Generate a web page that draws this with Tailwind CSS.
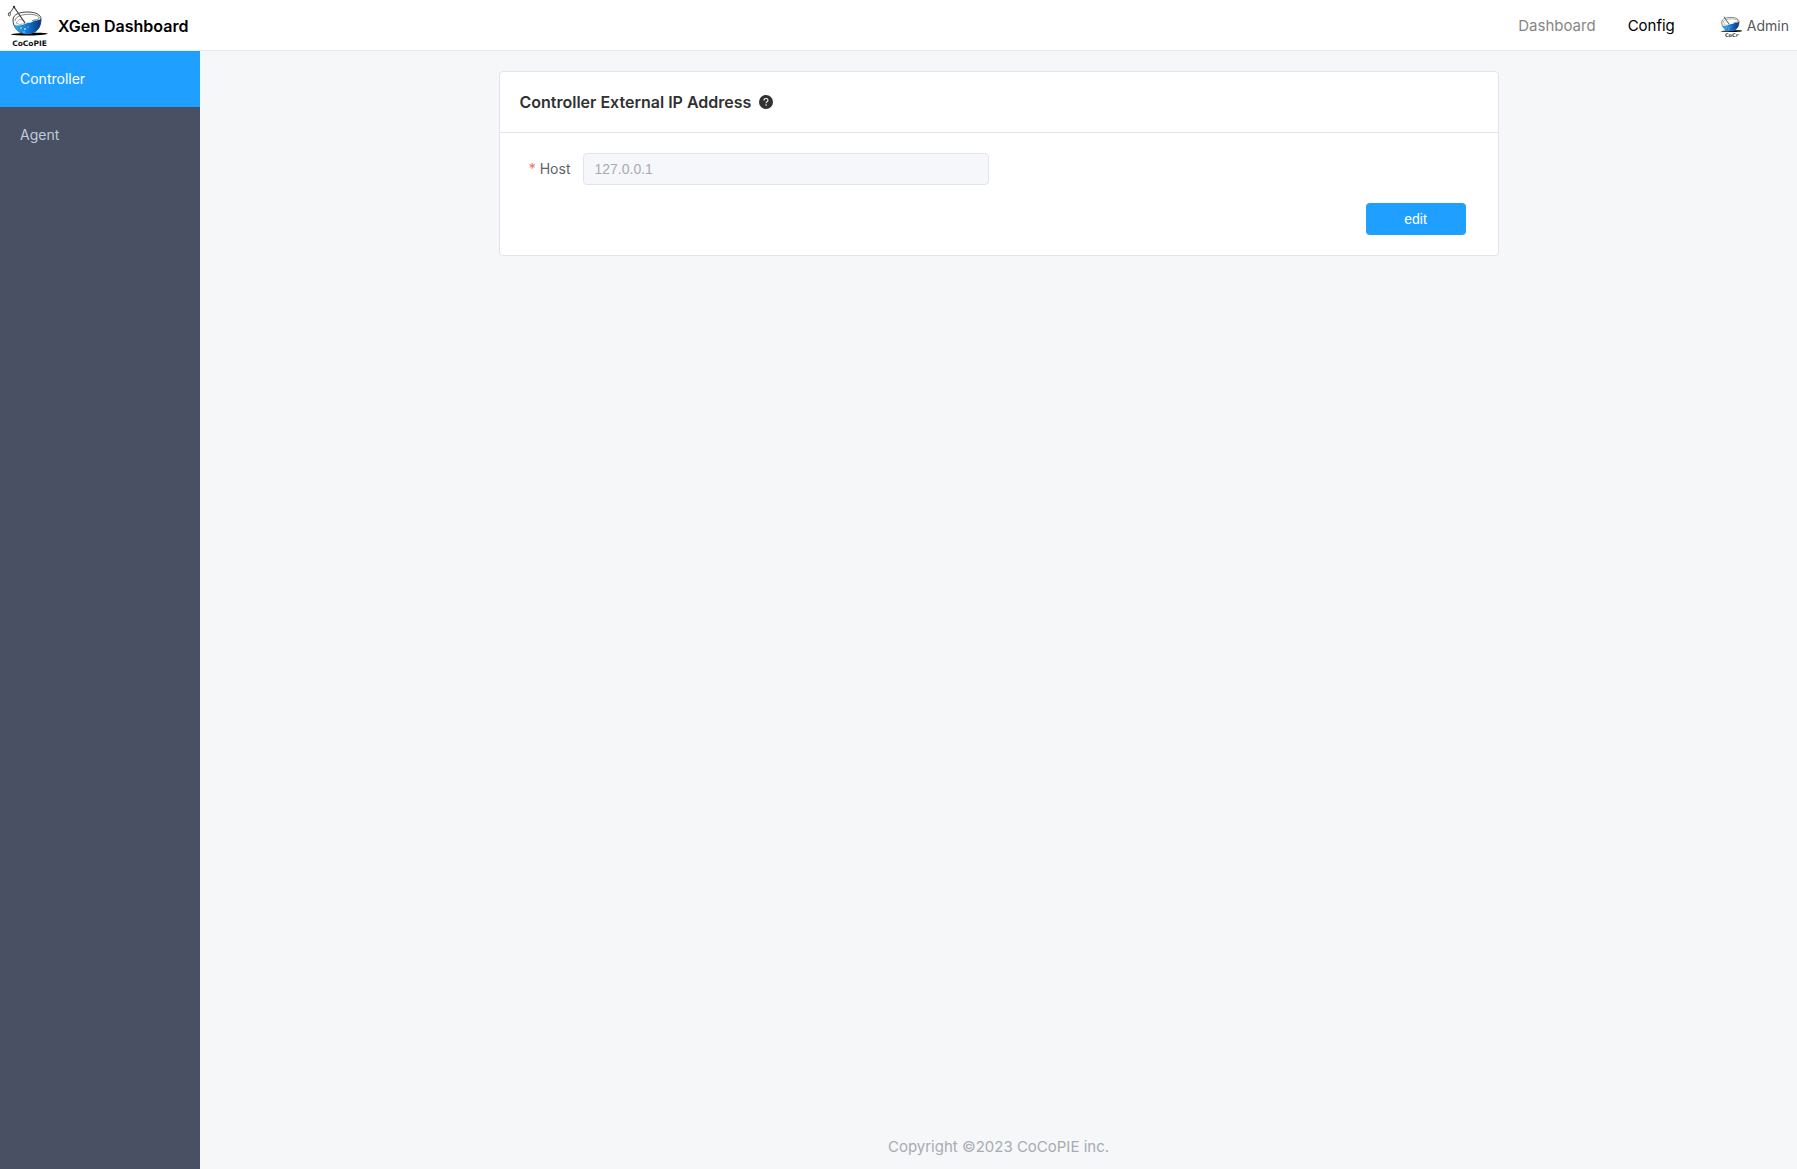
<!DOCTYPE html>
<html lang="en">
<head>
<meta charset="utf-8">
<meta name="viewport" content="width=device-width, initial-scale=1">
<title>XGen Dashboard</title>
<script src="https://cdn.jsdelivr.net/npm/@tailwindcss/browser@4"></script>
</head>
<body class="flex min-h-screen flex-col bg-[#f5f7f9] font-['Inter',sans-serif] text-sm text-[#303133]">
  <!-- Shared logo artwork -->
  <svg class="absolute size-0" aria-hidden="true">
    <defs>
      <linearGradient id="water" x1="0" y1="0" x2="1" y2="0">
        <stop offset="0" stop-color="#35abee"/>
        <stop offset=".5" stop-color="#1478d0"/>
        <stop offset="1" stop-color="#06357c"/>
      </linearGradient>
      <symbol id="bowl" viewBox="7 5 42 32">
        <path d="M10.500 34.500C14 32.500 44 32 48 33.500C45 36 15 36 10.500 34.500Z" fill="#000"/>
        <path d="M13 20C13 14 20 12 28 12C36 12 41 15 41 19C41 27 37 34 27 34C18 34 13 27 13 20Z" fill="#fff" stroke="#111" stroke-width=".8"/>
        <path d="M13.800 24.500C17 26 22 25.500 25 24C28 22 30 23.500 33 21.500C35 20 38 21 41 19C41 27 37 34 27 34C20 34 15.500 30 13.800 24.500Z" fill="url(#water)"/>
        <path d="M15 21C15 16.500 22 14.300 29 14.300C35 14.300 39.500 16 39 18.500C38 20.500 35 19.500 32 20.500" fill="none" stroke="#333" stroke-width=".6"/>
        <path d="M16 23L20 19L24 20.500L25 23.500L20 24.500Z" fill="#fff" stroke="#666" stroke-width=".5"/>
        <path d="M14 7L25 23" stroke="#444" stroke-width="1.200"/>
        <path d="M14 7L9.500 13.500" stroke="#444" stroke-width="1"/>
        <circle cx="14" cy="7" r="1.200" fill="#333"/>
        <ellipse cx="9.300" cy="14.300" rx="1" ry="1.700" fill="#fff" stroke="#222" stroke-width=".8"/>
        <circle cx="21" cy="28" r=".8" fill="#bfe6ff"/><circle cx="25" cy="29" r=".9" fill="#bfe6ff"/><circle cx="24" cy="32" r=".7" fill="#bfe6ff"/><circle cx="28" cy="27" r=".6" fill="#bfe6ff"/>
      </symbol>
    </defs>
  </svg>

  <header class="flex h-[51px] shrink-0 items-center justify-between border-b border-[#e8eaee] bg-white pt-0.5 pr-2 pl-[7px]">
    <a href="#" class="flex items-center gap-2 text-base font-semibold text-black">
      <svg class="h-[42px] w-[43px]" viewBox="7 5 43 42" role="img" aria-label="CoCoPIE">
        <use href="#bowl" x="7" y="5" width="42" height="32"/>
        <text x="29.500" y="46" text-anchor="middle" font-family="DejaVu Sans" font-weight="700" font-size="7.500" fill="#111">CoCoPIE</text>
      </svg>
      <span>XGen Dashboard</span>
    </a>
    <nav class="flex items-center text-[15px]">
      <a href="#" class="text-[#868686]">Dashboard</a>
      <a href="#" class="ml-8 text-black">Config</a>
      <a href="#" class="ml-11 flex items-center gap-1 text-sm text-[#55585e]">
        <svg class="size-6 rounded-full" viewBox="0 0 24 24" aria-hidden="true">
          <use href="#bowl" x="-1" y="-1" width="26" height="20"/>
          <text x="13" y="23" text-anchor="middle" font-family="DejaVu Sans" font-weight="700" font-size="5" fill="#333">CoCo</text>
        </svg>
        <span>Admin</span>
      </a>
    </nav>
  </header>

  <div class="flex flex-1">
    <aside class="w-[200px] shrink-0 bg-[#4a5064]">
      <nav class="flex flex-col">
        <a href="#" class="flex h-14 items-center bg-[#1f9fff] px-5 text-white">Controller</a>
        <a href="#" class="flex h-14 items-center px-5 text-[#bfcbd9]">Agent</a>
      </nav>
    </aside>

    <div class="flex flex-1 flex-col items-center px-5 pt-5 pb-3">
      <main class="w-full max-w-[1000px] rounded border border-[#e1e4ea] bg-white">
        <div class="flex h-[61px] items-center gap-2 border-b border-[#e1e4ea] px-5">
          <h1 class="text-base font-semibold">Controller External IP Address</h1>
          <svg class="size-3.5" viewBox="0 0 14 14" role="img" aria-label="Help">
            <circle cx="7" cy="7" r="7" fill="#303133"/>
            <path d="M5 5.400C5 4.200 5.800 3.500 7 3.500S9 4.200 9 5.300C9 6.600 7.100 6.700 7.100 8.200" fill="none" stroke="#fff" stroke-width="1.100"/>
            <circle cx="7.100" cy="10" r=".8" fill="#fff"/>
          </svg>
        </div>
        <form class="p-5">
          <div class="flex w-[49%] items-center">
            <label for="host" class="w-[63px] shrink-0 pr-3 text-right whitespace-nowrap text-[#606266]"><span class="mr-1 text-[#f56c6c]">*</span>Host</label>
            <input id="host" type="text" value="127.0.0.1" disabled class="h-8 min-w-0 flex-1 rounded border border-[#e1e4ea] bg-[#f5f7fa] px-[11px] font-['Liberation_Sans',sans-serif] text-[#a8abb2]">
          </div>
          <div class="mt-[18px] flex justify-end pr-3">
            <button type="button" class="h-8 w-[100px] rounded bg-[#1f9fff] font-['Liberation_Sans',sans-serif] text-white">edit</button>
          </div>
        </form>
      </main>
      <footer class="mt-auto text-[15px] text-[#a8abb2]">Copyright ©2023 CoCoPIE inc.</footer>
    </div>
  </div>
</body>
</html>
